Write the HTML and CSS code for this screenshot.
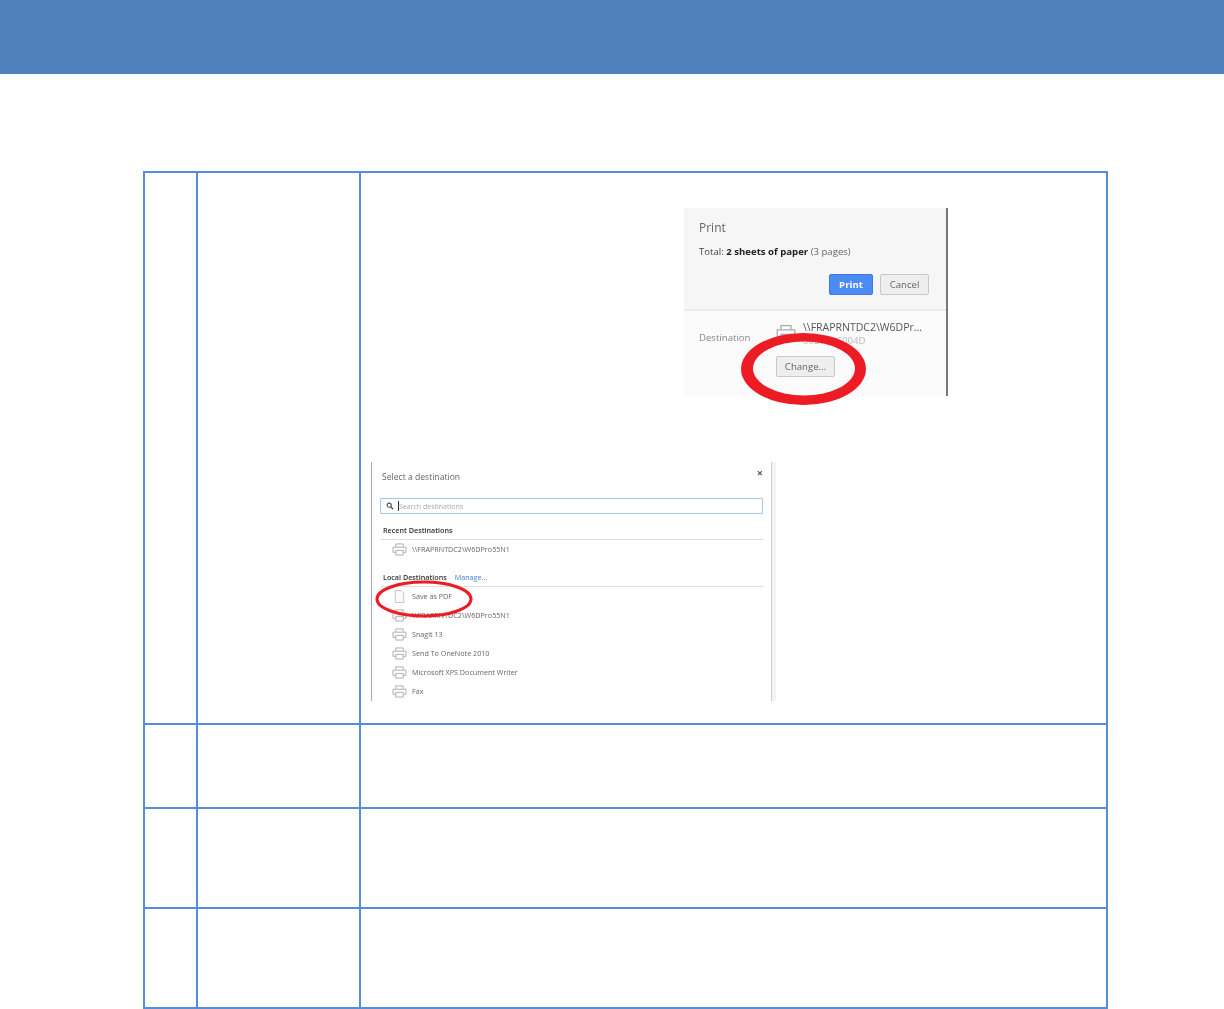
FILE: index.html
```html
<!DOCTYPE html>
<html lang="en">
<head>
<meta charset="utf-8">
<title>Print to PDF</title>
<link rel="stylesheet" href="styles.css">
</head>
<body>
<svg class="defs" width="0" height="0" aria-hidden="true">
  <symbol id="printer" viewBox="0 0 16 14">
    <path d="M4 4V1h8v3M4 10H1V4.5h14V10h-3M4 8h8v5H4z" fill="none" stroke="currentColor" stroke-width="1"/>
  </symbol>
</svg>
<header class="banner"></header>
<main class="sheet">
  <section class="steps">
    <div class="cell"></div>
    <div class="cell"></div>
    <div class="cell cell-shots">
      <figure class="print-shot">
        <div class="print-top">
          <div class="print-title">Print</div>
          <div class="print-total">Total: <b>2 sheets of paper</b> <span>(3 pages)</span></div>
          <div class="print-actions">
            <span class="btn btn-primary">Print</span>
            <span class="btn">Cancel</span>
          </div>
        </div>
        <div class="print-dest">
          <span class="dest-label">Destination</span>
          <svg class="dest-icon"><use href="#printer"/></svg>
          <div class="dest-text">
            <div class="dest-name">\\FRAPRNTDC2\W6DPr...</div>
            <div class="dest-sub">002V W6004D</div>
          </div>
        </div>
        <span class="btn btn-change">Change...</span>
        <svg class="ring ring-change" viewBox="0 0 126 73"><path fill="#ed1c24" fill-rule="evenodd" d="M0 36a62.500 36 0 1 0 125 0a62.500 36 0 1 0 -125 0zM12 35.500a51 27 0 1 1 102 0a51 27 0 1 1 -102 0z"/></svg>
      </figure>
      <figure class="dest-shot">
        <div class="dialog-head"><span>Select a destination</span><span class="dialog-close">×</span></div>
        <div class="search"><svg class="search-icon" viewBox="0 0 10 10"><circle cx="4" cy="4" r="2.6" fill="none" stroke="#555" stroke-width="1.4"/><path d="M6 6l3 3" stroke="#555" stroke-width="1.6"/></svg><i class="caret"></i><span>Search destinations</span></div>
        <div class="group-head"><b>Recent Destinations</b></div>
        <div class="row"><svg class="row-icon"><use href="#printer"/></svg>\\FRAPRNTDC2\W6DPro55N1</div>
        <div class="group-head group-local"><b>Local Destinations</b><a class="manage">Manage...</a></div>
        <div class="row"><svg class="row-icon doc" viewBox="0 0 16 14"><path d="M3.500 .5h6l3 3v10h-9z" fill="#fafafa" stroke="#aaa" stroke-width=".7"/></svg>Save as PDF</div>
        <div class="row"><svg class="row-icon"><use href="#printer"/></svg>\\FRAPRNTDC2\W6DPro55N1</div>
        <div class="row"><svg class="row-icon"><use href="#printer"/></svg>Snagit 13</div>
        <div class="row"><svg class="row-icon"><use href="#printer"/></svg>Send To OneNote 2010</div>
        <div class="row"><svg class="row-icon"><use href="#printer"/></svg>Microsoft XPS Document Writer</div>
        <div class="row"><svg class="row-icon"><use href="#printer"/></svg>Fax</div>
        <svg class="ring ring-pdf" viewBox="0 0 98 38"><ellipse cx="49" cy="19" rx="47" ry="17" fill="none" stroke="#ed1c24" stroke-width="3"/></svg>
      </figure>
    </div>
    <div class="cell"></div><div class="cell"></div><div class="cell"></div>
    <div class="cell"></div><div class="cell"></div><div class="cell"></div>
    <div class="cell"></div><div class="cell"></div><div class="cell"></div>
  </section>
</main>
</body>
</html>
```

FILE: styles.css
```css
* { box-sizing: border-box; }
html, body { margin: 0; background: #fff; }
body { font-family: "Open Sans", "Liberation Sans", sans-serif; overflow: hidden; }
.defs { position: absolute; }
.banner { height: 74px; background: #4f81bd; }
.sheet { padding: 97px 116px 0 143px; }
.steps {
  display: grid;
  grid-template-columns: 51px 161px 745px;
  grid-template-rows: 550px 82px 98px 98px;
  gap: 2px;
  padding: 2px;
  width: 965px;
  background: #558ed5;
}
.cell { background: #fff; }
.cell-shots { padding: 35px 0 0 10px; }
figure { margin: 0; }

.print-shot {
  position: relative;
  width: 264px;
  height: 188px;
  margin-left: 313px;
  background: #fbfbfb;
  border-right: 2px solid #777;
  color: #666;
  font-size: 9.6px;
}
.print-shot > *:not(.ring) { filter: blur(.6px); }
.print-top {
  height: 103px;
  padding: 12px 17px 0 15px;
  background: #f6f6f6;
  border-bottom: 2px solid #e9e9e9;
}
.print-title { font-size: 12px; line-height: 16px; color: #666; }
.print-total { margin-top: 8px; line-height: 16px; color: #444; }
.print-total b { color: #222; }
.print-total span { color: #666; }
.print-actions { display: flex; justify-content: flex-end; gap: 7px; margin-top: 14px; }
.btn {
  display: inline-flex;
  align-items: center;
  justify-content: center;
  height: 21px;
  min-width: 49px;
  border: 1px solid #c8c8c8;
  border-radius: 2px;
  background: #eee;
  color: #666;
}
.btn-primary { min-width: 44px; background: #4a8bf5; border-color: #3d7ae0; color: #fff; font-weight: 700; }
.print-dest { display: flex; height: 37px; padding: 9px 0 0 15px; }
.dest-label { width: 77px; margin-top: 11px; line-height: 14px; color: #888; }
.dest-icon { width: 20px; height: 22px; margin-top: 2px; color: #aaa; }
.dest-text { margin: 0 0 0 7px; }
.dest-name { font-size: 10.5px; line-height: 14px; color: #555; white-space: nowrap; }
.dest-sub { line-height: 14px; color: #bbb; }
.btn-change { width: 59px; margin: 8px 0 0 92px; }
.ring { position: absolute; display: block; }
.ring-change { left: 57px; top: 125px; width: 126px; height: 73px; }

.dest-shot {
  position: relative;
  width: 405px;
  height: 239px;
  margin-top: 66px;
  padding: 0 9px 0 9px;
  border-left: 1px solid #aaa;
  border-right: 4px solid #f4f4f4;
  box-shadow: inset -1px 0 #d0d0d0;
  color: #666;
  font-size: 7.2px;
}
.dest-shot > *:not(.ring) { filter: blur(.5px); }
.dialog-head { display: flex; justify-content: space-between; height: 36px; padding: 8px 0 0 1px; font-size: 8.6px; line-height: 14px; }
.dialog-close { margin-top: -4px; font-size: 11px; font-weight: 700; color: #555; }
.search {
  display: flex;
  align-items: center;
  height: 16px;
  width: 383px;
  margin-left: -1px;
  padding-left: 5px;
  border: 1px solid #a9c4f0;
  border-radius: 1px;
  color: #aaa;
  font-size: 7px;
}
.search-icon { width: 8px; height: 8px; margin-right: 4px; }
.caret { width: 1px; height: 10px; background: #333; }
.group-head {
  height: 26px;
  padding: 11px 0 0 2px;
  border-bottom: 1px solid #ddd;
  color: #333;
  line-height: 10px;
}
.group-head b { font-weight: 600; }
.group-local { height: 29px; margin-top: -1px; padding-top: 14px; }
.manage { margin-left: 8px; color: #4a7fd0; }
.row { display: flex; align-items: center; height: 19px; padding: 0 0 1px 11px; white-space: nowrap; }
.row-icon { width: 15px; height: 13px; margin-right: 5px; color: #aaa; }
.ring-pdf { left: 3px; top: 118px; width: 98px; height: 38px; }
```
